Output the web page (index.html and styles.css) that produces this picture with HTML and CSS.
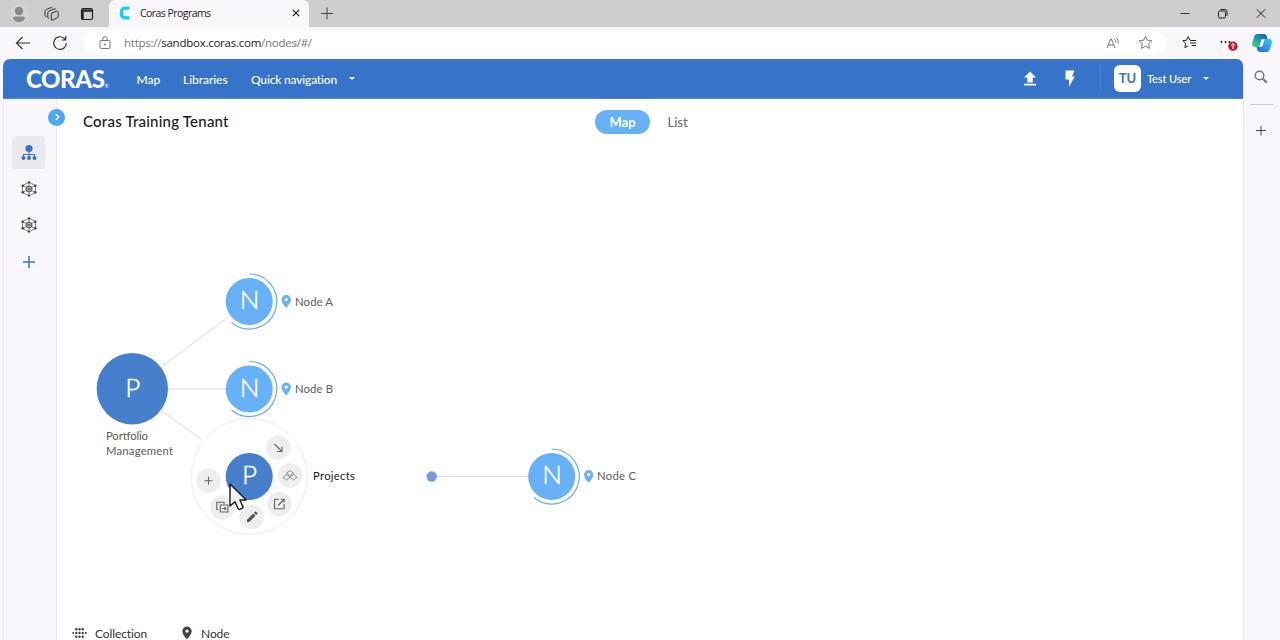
FILE: index.html
```html
<!DOCTYPE html>
<html lang="en">
<head>
    <meta charset="UTF-8">
    <meta name="viewport" content="width=device-width, initial-scale=1.0">
    <title>Coras Programs</title>
    <link rel="stylesheet" href="styles.css">
</head>
<body>
    <div class="tabstrip">
        <svg class="ic-profile" width="20" height="20" viewBox="0 0 20 20"><circle cx="10" cy="10" r="9.5" fill="#d6d3d4"/><circle cx="10" cy="7" r="4.2" fill="#8c8989"/><path d="M4 14.500q0-2 2-2h8q2 0 2 2q-2 3.500-6 3.500T4 14.500z" fill="#8c8989"/></svg>
        <svg class="ic-workspaces" width="16" height="16" viewBox="0 0 16 16" fill="none" stroke="#333" stroke-width="1" stroke-linejoin="round"><path d="M7.300 7.300l5.200-2q1.700-.5 1.700 1.200v3.800q0 1-1 1.500l-4.200 2.200q-1.700.8-1.700-1z"/><path d="M5 12.300q-1.200.2-1.200-1V7q0-1.500 1.300-2l5-2q1.200-.4 1.900.5"/><path d="M2.500 10.600Q1 10.800 1 9.500V5.500Q1 4 2.300 3.500l4.500-1.800q1-.4 1.700.3"/></svg>
        <svg class="ic-tabs" width="14" height="14" viewBox="0 0 14 14"><rect x="1.500" y="1.700" width="11" height="10.800" rx="1.800" fill="none" stroke="#222" stroke-width="1.200"/><path d="M1.500 2.500h11v2.300h-11zM1.500 4h2.200v8H1.500z" fill="#222"/></svg>
        <div class="tab">
            <svg width="12" height="14" viewBox="0 0 12 14"><path d="M10.500 2.200H6.500Q2.300 2.200 2.300 7t4.200 4.800h4" fill="none" stroke="#12cdf4" stroke-width="3.200"/></svg>
            <span class="tab-title">Coras Programs</span>
            <svg width="10" height="10" viewBox="0 0 10 10"><path d="M1.800 1.800l6.400 6.400M8.200 1.800L1.800 8.200" stroke="#222" stroke-width="1.200"/></svg>
        </div>
        <svg class="ic-newtab" width="14" height="14" viewBox="0 0 14 14"><path d="M1 6.500h12M7 .5v12" stroke="#444" stroke-width="1"/></svg>
        <div class="window-buttons">
            <svg width="10" height="10" viewBox="0 0 10 10"><path d="M.5 4.500h9" stroke="#333"/></svg>
            <svg width="10" height="10" viewBox="0 0 10 10" fill="none" stroke="#222"><rect x=".5" y="2" width="7" height="7" rx="1.500"/><path d="M2.500 .5h4.500q2 0 2 2v4.500"/></svg>
            <svg width="10" height="10" viewBox="0 0 10 10"><path d="M.8 .3l8.400 8.400M9.200 .3L.8 8.700" stroke="#222"/></svg>
        </div>
    </div>

    <div class="toolbar">
        <svg class="ic-back" width="16" height="14" viewBox="0 0 16 14" fill="none" stroke="#333" stroke-width="1.200"><path d="M15 7H1.500M7.500 1L1.500 7l6 6"/></svg>
        <svg class="ic-reload" width="16" height="16" viewBox="0 0 16 16" fill="none" stroke="#333" stroke-width="1.200"><path d="M14.300 8A6.300 6.300 0 1 1 12 3.200l1.500 1.600M13.700 1v4H9.800"/></svg>
        <div class="address">
            <svg width="12" height="14" viewBox="0 0 12 14" fill="none" stroke="#777"><rect x="1" y="4.500" width="10" height="8" rx="1.200"/><path d="M3.700 4.500V3a2.300 2.300 0 0 1 4.600 0v1.500"/><circle cx="6" cy="8.500" r=".6" fill="#777"/></svg>
            <span class="url">https://<b>sandbox.coras.com</b>/nodes/#/</span>
            <svg class="ic-read" width="14" height="14" viewBox="0 0 14 14" fill="none" stroke="#777"><path d="M1 12L4.700 3h.6L9 12M2.400 9h5.200M8.500 3.200q1.500 1.200 1 3.300M10.200 1.700q2.800 2.300 1.800 5.800"/></svg>
            <svg width="15" height="15" viewBox="0 0 15 15" fill="none" stroke="#777" stroke-linejoin="round"><path d="M7.500 1.200l1.900 4 4.400.6-3.200 3.100.8 4.400-3.900-2.100-3.900 2.100.8-4.400-3.200-3.100 4.400-.6z"/></svg>
        </div>
        <svg class="ic-favorites" width="15" height="15" viewBox="0 0 15 15" fill="none" stroke="#222" stroke-linejoin="round"><path d="M9 5.400L7.900 5.200 6.200 1.700 4.500 5.200.9 5.700l2.700 2.700-.7 4.300 3.300-1.900M9 5.500h5.200M8 8h6.200M9.500 10.500h4.700"/></svg>
        <svg class="ic-more" width="18" height="17" viewBox="0 0 18 17"><g fill="#222"><circle cx="1.500" cy="8" r="1"/><circle cx="5.500" cy="8" r="1"/><circle cx="9.500" cy="8" r="1"/></g><circle cx="13" cy="12.200" r="4.700" fill="#bd2030"/><path d="M13 15V9.700M11.200 11.400L13 9.600l1.800 1.800" fill="none" stroke="#fff"/></svg>
        <svg class="ic-copilot" width="20" height="20" viewBox="0 0 20 20">
            <defs>
                <linearGradient id="cp1" x1="0" y1="1" x2="1" y2="0"><stop offset="0" stop-color="#5fd06b"/><stop offset=".45" stop-color="#16a5ae"/><stop offset="1" stop-color="#1359b4"/></linearGradient>
                <linearGradient id="cp2" x1="0" y1="1" x2="1" y2="0"><stop offset="0" stop-color="#1b66e5"/><stop offset="1" stop-color="#40c4f6"/></linearGradient>
            </defs>
            <path d="M5.500 1H12q2 0 2.700 2l.9 3H12q-2 0-2.600 2L7.500 14H2.800Q-.5 14 .2 10L2 4Q3 1 5.500 1z" fill="url(#cp1)"/>
            <path d="M14.500 19H8q-2 0-2.700-2l-.9-3H8q2 0 2.600-2L12.500 6h4.700q3.300 0 2.600 4L18 16q-1 3-3.500 3z" fill="url(#cp2)"/>
            <path d="M9.300 6.500h3l-1.900 7h-3z" fill="#f9f7fb"/>
        </svg>
    </div>

    <div class="window">
        <div class="app">
            <header class="app-header">
                <div class="logo">CORAS<span>®</span></div>
                <a class="nav-map">Map</a>
                <a class="nav-libraries">Libraries</a>
                <a class="nav-quick">Quick navigation</a>
                <i class="caret"></i>
                <div class="header-right">
                    <svg class="ic-upload" width="14" height="16" viewBox="0 0 14 16" fill="#fff"><path d="M7 .5l6 6H9.700v5H4.300v-5H1zM1 12.800h12v1.700H1z"/></svg>
                    <svg class="ic-bolt" width="10" height="18" viewBox="0 0 10 18" fill="#fff"><path d="M.5 .5h9L7 6.500h2.800L4 17V9.500H.5z"/></svg>
                    <div class="user">
                        <span class="avatar">TU</span>
                        <span class="user-name">Test User</span>
                        <i class="caret"></i>
                    </div>
                </div>
            </header>

            <div class="app-body">
                <nav class="rail">
                    <div class="rail-item active">
                        <svg width="16" height="17" viewBox="0 0 16 17" fill="#3673c9"><circle cx="8" cy="4.500" r="3.600"/><circle cx="2.500" cy="14" r="2"/><circle cx="8" cy="14" r="2"/><circle cx="13.500" cy="14" r="2"/><path d="M8 8v6M2.500 13v-2.500h11V13" fill="none" stroke="#3673c9" stroke-width="1.100"/></svg>
                    </div>
                    <div class="rail-item">
                        <svg width="16" height="16" viewBox="0 0 16 16"><use href="#network"/></svg>
                    </div>
                    <div class="rail-item">
                        <svg width="16" height="16" viewBox="0 0 16 16"><use href="#network"/></svg>
                    </div>
                    <div class="rail-item">
                        <svg width="12" height="12" viewBox="0 0 12 12"><path d="M0 6h12M6 0v12" stroke="#3673c9" stroke-width="1.500"/></svg>
                    </div>
                    <div class="rail-toggle">
                        <svg width="8" height="8" viewBox="0 0 8 8"><path d="M2.700 1l3 3-3 3" fill="none" stroke="#fff" stroke-width="1.300"/></svg>
                    </div>
                </nav>

                <main class="content">
                    <div class="content-head">
                        <h1>Coras Training Tenant</h1>
                        <div class="switch">
                            <span class="on">Map</span>
                            <span>List</span>
                        </div>
                    </div>

                    <svg class="map" width="1186" height="480" viewBox="57 144 1186 480">
                        <defs>
                            <g id="network">
                                <path d="M8 1.200l6.500 3.300v7L8 14.800l-6.500-3.300v-7zM8 1v14M1.500 4.500l13 7M14.500 4.500l-13 7" fill="none" stroke="#555" stroke-width=".7"/>
                                <circle cx="8" cy="8" r="3" fill="#aaa" stroke="#555"/>
                                <path d="M6.300 8h3.400" stroke="#444"/>
                                <g fill="#444"><circle cx="8" cy="1.400" r="1.200"/><circle cx="8" cy="14.600" r="1.200"/><circle cx="1.700" cy="4.700" r="1.300"/><circle cx="14.300" cy="4.700" r="1.300"/><circle cx="1.700" cy="11.300" r="1.300"/><circle cx="14.300" cy="11.300" r="1.300"/></g>
                            </g>
                            <path id="pin" d="M0-6.500a4.700 4.700 0 0 0-4.700 4.700C-4.700 1.500 0 6.300 0 6.300s4.700-4.800 4.700-8.100A4.700 4.700 0 0 0 0-6.500zM0-3.600a1.700 1.700 0 1 1 0 3.400a1.700 1.700 0 0 1 0-3.400z"/>
                            <g id="node">
                                <circle r="23.500" fill="#67b1f8"/>
                                <path d="M0-27.500A27.500 27.500 0 1 1-17.700 21" fill="none" stroke="#6aaced" stroke-width="1.200"/>
                                <use href="#pin" x="37" y="0" fill="#67b1f8"/>
                            </g>
                        </defs>

                        <g class="links">
                            <path d="M132 389L249 301.500M132 389H249M132 389L202 440M432 476.500H552"/>
                        </g>

                        <circle cx="132.300" cy="388.700" r="35.700" fill="#467fcb"/>
                        <text class="letter" x="132.700" y="396.500">P</text>
                        <text class="label" x="106" y="439.500" textLength="42">Portfolio</text>
                        <text class="label" x="106" y="455" textLength="67">Management</text>

                        <use href="#node" x="249.200" y="301.500"/>
                        <text class="letter" x="249.500" y="309">N</text>
                        <text class="label" x="295" y="305.500" textLength="38">Node A</text>

                        <use href="#node" x="249.200" y="389"/>
                        <text class="letter" x="249.500" y="396.500">N</text>
                        <text class="label" x="295" y="393" textLength="38">Node B</text>

                        <circle cx="249.200" cy="476.500" r="58" fill="#fff" stroke="#ececee"/>
                        <circle cx="249.200" cy="476.500" r="23.500" fill="#467fcb"/>
                        <text class="letter" x="249.500" y="484">P</text>
                        <g class="bubbles">
                            <circle cx="278.200" cy="447.500" r="12.200"/>
                            <circle cx="290" cy="475.500" r="12.200"/>
                            <circle cx="279.500" cy="504" r="12.200"/>
                            <circle cx="251.700" cy="517" r="12.200"/>
                            <circle cx="222.500" cy="507.500" r="12.200"/>
                            <circle cx="208.500" cy="480.700" r="12.200"/>
                        </g>
                        <g class="bubble-icons">
                            <path d="M274.500 444l7 7M282 446.500v5h-5"/>
                            <path stroke-width=".7" d="M290 470.700l3.700 2.500-3.700 2.500-3.700-2.500zM286.500 474.500l3.500 2.700-3.500 2.700-3.500-2.700zM293.500 474.500l3.500 2.700-3.500 2.700-3.500-2.700z"/>
                            <path d="M279 499.200h-4.500v9.600h9.600V504M280.700 499.200h3.500v3.500M284 499.500l-6 6"/>
                            <path fill="#555" stroke="none" d="M247 519.800l6.300-6.300 2.200 2.200-6.300 6.300H247zM254 512.800l1-1q.6-.5 1.200 0l1 1q.6.600 0 1.200l-1 1z"/>
                            <path d="M218.500 509.500h-1.700v-7.300h7.300v1.800M220.300 505h7.600v7h-7.600zM222 508.500h4M224.500 507l1.500 1.500-1.500 1.500"/>
                            <path d="M204.500 480.700h8M208.500 476.700v8"/>
                        </g>
                        <path class="cursor" d="M230 484v22l5-4.300 3.200 7q.5 1 1.500.6l2.600-1.200q1-.5.600-1.500l-3-6.600h6.300z"/>
                        <text class="label strong" x="313" y="480" textLength="42">Projects</text>

                        <circle cx="431.700" cy="476.500" r="5.200" fill="#769bdc"/>
                        <use href="#node" x="551.700" y="476.500"/>
                        <text class="letter" x="552" y="484">N</text>
                        <text class="label" x="597" y="480" textLength="39">Node C</text>
                    </svg>

                    <div class="legend">
                        <svg width="15" height="14" viewBox="0 0 15 14" fill="#444"><circle cx="1.200" cy="7" r="1"/><circle cx="13.800" cy="7" r="1"/><circle cx="4.300" cy="7" r="1.200"/><circle cx="7.500" cy="7" r="1.200"/><circle cx="10.700" cy="7" r="1.200"/><circle cx="4.300" cy="3.300" r="1.200"/><circle cx="7.500" cy="3.300" r="1.200"/><circle cx="10.700" cy="3.300" r="1.200"/><circle cx="4.300" cy="10.700" r="1.200"/><circle cx="7.500" cy="10.700" r="1.200"/><circle cx="10.700" cy="10.700" r="1.200"/></svg>
                        <span class="legend-collection">Collection</span>
                        <svg width="12" height="14" viewBox="-6 -7 12 14" fill="#444"><use href="#pin"/></svg>
                        <span class="legend-node">Node</span>
                    </div>
                </main>
            </div>
        </div>

        <aside class="sidebar">
            <svg width="14" height="14" viewBox="0 0 14 14" fill="none"><circle cx="5.500" cy="5.500" r="4.300" stroke="#777" stroke-width="1.500"/><path d="M8.800 8.800l4 3.800" stroke="#8a63cf" stroke-width="2.200"/></svg>
            <hr>
            <svg width="10" height="10" viewBox="0 0 10 10"><path d="M0 4.500h10M5 -.5v10" stroke="#444"/></svg>
        </aside>
    </div>
</body>
</html>
```
FILE: styles.css
```css
* {
    box-sizing: border-box;
}
body {
    margin: 0;
    height: 640px;
    overflow: hidden;
    background: #f9f7fb;
    font-family: Lato, sans-serif;
    display: flex;
    flex-direction: column;
}
svg {
    display: block;
    flex: none;
}

/* browser */
.tabstrip {
    height: 27px;
    flex: none;
    display: flex;
    align-items: center;
    background: #cfcccd;
}
.ic-profile {
    margin-left: 9px;
}
.ic-workspaces {
    margin-left: 15px;
}
.ic-tabs {
    margin-left: 20px;
}
.tab {
    display: flex;
    align-items: center;
    width: 200px;
    height: 27px;
    margin-left: 15px;
    padding: 0 8px 1px 10px;
    background: #f9f7fb;
    border-radius: 6px 6px 0 0;
}
.tab-title {
    flex: 1;
    margin-left: 9px;
    font: 10.5px "Open Sans", sans-serif;
    letter-spacing: -0.55px;
    color: #222;
}
.ic-newtab {
    margin-left: 11px;
}
.window-buttons {
    display: flex;
    gap: 28px;
    margin-left: auto;
    margin-right: 14px;
}
.toolbar {
    height: 32px;
    flex: none;
    display: flex;
    align-items: center;
    padding-bottom: 1px;
}
.ic-back {
    margin-left: 15px;
}
.ic-reload {
    margin-left: 21px;
}
.address {
    display: flex;
    align-items: center;
    width: 1083px;
    height: 25px;
    margin-left: 15px;
    padding: 0 13px 0 16px;
    background: #fff;
    border-radius: 13px;
}
.url {
    flex: 1;
    margin-left: 13px;
    font: 11.5px "Open Sans", sans-serif;
    letter-spacing: -0.25px;
    color: #777;
}
.url b {
    font-weight: normal;
    color: #222;
}
.ic-read {
    margin-right: 18px;
}
.ic-favorites {
    margin-left: 16px;
}
.ic-more {
    margin-left: 23px;
}
.ic-copilot {
    margin-left: 14px;
}
.window {
    display: flex;
    flex: 1;
    min-height: 0;
}
.sidebar {
    width: 36px;
    display: flex;
    flex-direction: column;
    align-items: center;
    padding: 11px 2px 0 0;
}
.sidebar hr {
    width: 23px;
    margin: 20px 0 21px;
    border: 0;
    border-top: 1px solid #cfcdd0;
}

/* app */
.app {
    width: 1241px;
    margin-left: 3px;
    display: flex;
    flex-direction: column;
    border-radius: 7px 7px 0 0;
    overflow: hidden;
    border-right: 1px solid #e8e6e9;
}
.app-header {
    height: 40px;
    flex: none;
    display: flex;
    align-items: center;
    padding-left: 23px;
    margin-right: -1px;
    background: #3673c9;
    border-bottom: 1px solid #5589d2;
    color: #fff;
}
.app-header a {
    padding-top: 2px;
    font-size: 12px;
    font-weight: 500;
}
.logo {
    width: 110.5px;
    font-size: 24px;
    font-weight: 900;
    letter-spacing: -0.4px;
    white-space: nowrap;
}
.logo span {
    font-size: 5px;
    font-weight: normal;
}
.nav-map {
    width: 46.5px;
}
.nav-libraries {
    width: 68px;
    letter-spacing: -0.05px;
}
.nav-quick {
    width: 98px;
    letter-spacing: -0.18px;
}
.caret {
    border: 3.5px solid transparent;
    border-top-color: #fff;
    border-bottom: 0;
}
.header-right {
    display: flex;
    align-items: center;
    margin-left: auto;
    padding-right: 35px;
}
.ic-bolt {
    margin-left: 28px;
}
.user {
    display: flex;
    align-items: center;
    margin-left: 25px;
    padding-left: 13px;
    border-left: 1px solid #4a84d4;
    font-size: 11px;
    font-weight: 500;
}
.avatar {
    width: 27px;
    height: 27px;
    border-radius: 6px;
    background: #fff;
    color: #3673c9;
    font-size: 13px;
    font-weight: bold;
    line-height: 26px;
    text-align: center;
}
.user-name {
    width: 49px;
    margin: 0 7px 0 6px;
    letter-spacing: -0.1px;
    white-space: nowrap;
}
.app-body {
    flex: 1;
    min-height: 0;
    display: flex;
}
.rail {
    position: relative;
    width: 54px;
    flex: none;
    padding: 36.5px 0 0 8px;
    background: #f9f7fb;
    border-left: 1px solid #efedf1;
    border-right: 1px solid #eeecf0;
}
.rail-item {
    width: 33px;
    height: 33px;
    margin-bottom: 3.6px;
    border-radius: 4px;
    display: flex;
    align-items: center;
    justify-content: center;
}
.rail-item.active {
    background: #ebe9ed;
}
.rail-toggle {
    position: absolute;
    top: 9.5px;
    right: -9px;
    width: 17px;
    height: 17px;
    border-radius: 50%;
    background: #51a6f2;
    display: flex;
    align-items: center;
    justify-content: center;
}
.content {
    flex: 1;
    background: #fff;
}
.content-head {
    display: flex;
    align-items: center;
    height: 45px;
    padding-left: 26px;
}
.content-head h1 {
    width: 512px;
    margin: 0;
    padding-bottom: 1px;
    font-size: 15px;
    font-weight: 500;
    letter-spacing: 0.22px;
    color: #1c1c1c;
}
.switch {
    display: flex;
    align-items: center;
    gap: 17.5px;
    font-size: 13px;
    color: #666;
}
.switch .on {
    width: 55px;
    height: 24px;
    border-radius: 12px;
    background: #67b1f8;
    color: #fff;
    font-weight: bold;
    line-height: 24px;
    text-align: center;
}
.map {
    font-family: Lato, sans-serif;
}
.links path {
    fill: none;
    stroke: #dcdcdc;
}
.letter {
    font-size: 26px;
    font-weight: 300;
    fill: #fff;
    stroke: #fff;
    stroke-width: 0.45px;
    text-anchor: middle;
}
.label {
    font-size: 11.3px;
    fill: #5c5c5c;
}
.label.strong {
    fill: #222;
}
.bubbles circle {
    fill: #efedef;
}
.bubble-icons {
    fill: none;
    stroke: #666;
    stroke-width: 1.1;
}
.cursor {
    fill: #f7f4f8;
    stroke: #1a1a1a;
    stroke-width: 1.4;
    stroke-linejoin: round;
}
.legend {
    display: flex;
    align-items: center;
    height: 18px;
    padding-left: 15px;
    font-size: 12px;
    letter-spacing: -0.1px;
    color: #333;
}
.legend-collection {
    width: 86px;
    margin-left: 8px;
}
.legend-node {
    margin-left: 8px;
}
```
